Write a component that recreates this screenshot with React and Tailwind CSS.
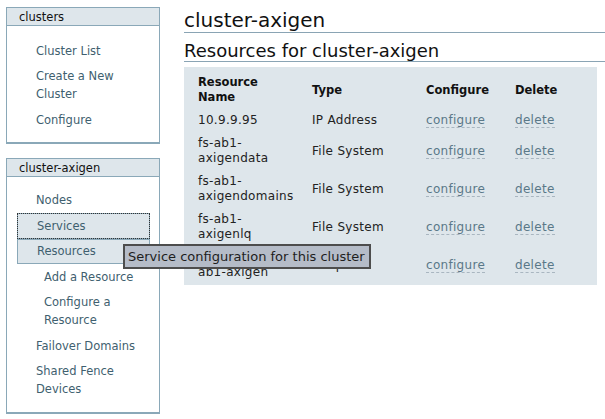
const FONT = { fontFamily: '"DejaVu Sans", Verdana, sans-serif' };

const CLUSTER_LINKS = [
    { label: 'Cluster List' },
    { label: 'Create a New Cluster' },
    { label: 'Configure' },
];

const AXIGEN_LINKS = [
    { label: 'Nodes' },
    { label: 'Services', active: true, focus: true },
    { label: 'Resources', active: true },
    { label: 'Add a Resource', sub: true },
    { label: 'Configure a Resource', sub: true },
    { label: 'Failover Domains' },
    { label: 'Shared Fence Devices' },
];

const RESOURCES = [
    { name: ['10.9.9.95'], type: 'IP Address' },
    { name: ['fs-ab1-', 'axigendata'], type: 'File System' },
    { name: ['fs-ab1-', 'axigendomains'], type: 'File System' },
    { name: ['fs-ab1-', 'axigenlq'], type: 'File System' },
    { name: ['script-', 'ab1-axigen'], type: 'Script' },
];

function SidePanel({ title, links, listClass }) {
    return (
        <div className="border border-b-2 border-[#8aa8b8] bg-white">
            <div className="h-[18px] border-b border-[#8aa8b8] bg-[#dee6eb] pl-[12px] text-[11.5px] leading-[18px] text-[#111]">
                {title}
            </div>
            <ul className={`pl-[10px] pr-[9px] ${listClass}`}>
                {links.map((link) => (
                    <li
                        key={link.label}
                        className={`pr-[2px] text-[11.5px] leading-[18px] text-[#3f5f6f] ${link.sub ? 'pl-[27px]' : 'pl-[19px]'} ${link.active ? 'border border-[#8aa8b8] bg-[#dee6eb] py-[2.75px]' : 'py-[3.75px]'} ${link.focus ? 'outline outline-1 outline-dotted outline-[#333] -outline-offset-1' : ''}`}
                    >
                        {link.label}
                    </li>
                ))}
            </ul>
        </div>
    );
}

function Row({ children, header }) {
    return (
        <div className={`grid grid-cols-[114px_114px_89px_1fr] items-center py-[4px] leading-[15px] ${header ? 'text-[11.5px] font-bold text-[#111]' : 'text-[12px] tracking-[0.3px] text-[#222]'}`}>
            {children}
        </div>
    );
}

function ActionLink({ children }) {
    return (
        <span className="self-center">
            <span className="border-b border-dashed border-[#a9b6c0] text-[#5a7888]">{children}</span>
        </span>
    );
}

export default function App() {
    return (
        <div className="relative h-[419px] w-[605px] overflow-hidden bg-white" style={FONT}>
            <div className="flex">
                <div className="ml-[6px] mt-[7px] flex w-[154px] shrink-0 flex-col gap-[14px]">
                    <SidePanel title="clusters" links={CLUSTER_LINKS} listClass="pt-[12px] pb-[9px] pr-[40px]" />
                    <SidePanel title="cluster-axigen" links={AXIGEN_LINKS} listClass="pt-[11px] pb-[10px]" />
                </div>
                <div className="ml-[24px] flex-1 pt-[9px]">
                    <h1 className="border-b border-[#8aa4b4] text-[20px] leading-[23px] text-[#111]">cluster-axigen</h1>
                    <h2 className="mt-[8px] border-b border-[#8aa4b4] text-[18px] leading-[20px] text-[#111]">
                        Resources for cluster-axigen
                    </h2>
                    <div className="mt-[5px] mr-[8px] bg-[#dee6eb] pl-[14px] pt-[4px] pb-px">
                        <Row header>
                            <span>Resource<br />Name</span>
                            <span>Type</span>
                            <span>Configure</span>
                            <span>Delete</span>
                        </Row>
                        {RESOURCES.map((r, i) => (
                            <Row key={i}>
                                <span>
                                    {r.name.map((line, j) => (
                                        <span key={j} className="block">{line}</span>
                                    ))}
                                </span>
                                <span>{r.type}</span>
                                <ActionLink>configure</ActionLink>
                                <ActionLink>delete</ActionLink>
                            </Row>
                        ))}
                    </div>
                </div>
            </div>
            <div className="absolute left-[123px] top-[244px] flex h-[25px] w-[248px] items-center border-2 border-[#4d4d4d] bg-[#b5bcc8] pl-[3px] text-[13px] text-[#1e1e1e]">
                Service configuration for this cluster
            </div>
        </div>
    );
}
